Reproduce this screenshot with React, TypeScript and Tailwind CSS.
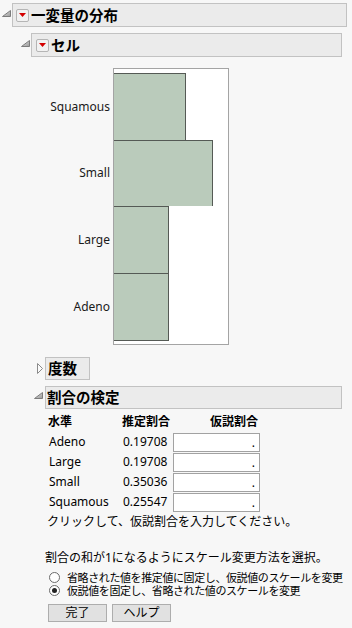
import React from 'react';

/* ── Data ── */
interface Level {
  name: string;
  est: number;
}

const levels: Level[] = [
  { name: 'Adeno', est: 0.19708 },
  { name: 'Large', est: 0.19708 },
  { name: 'Small', est: 0.35036 },
  { name: 'Squamous', est: 0.25547 },
];

// chart draws top → bottom in reverse order
const chartRows = [...levels].reverse();
const rowHeights = [67, 66, 67, 67];

const FONT = "font-['Noto_Sans','Noto_Sans_CJK_JP',sans-serif]";

function OpenTri() {
  return (
    <svg width="9" height="7" viewBox="0 0 9 7" className="shrink-0">
      <defs>
        <linearGradient id="tg" x1="0" y1="0" x2="1" y2="1">
          <stop offset="0" stopColor="#e4e4e4" />
          <stop offset="1" stopColor="#9a9a9a" />
        </linearGradient>
      </defs>
      <polygon points="8.5,0.5 8.5,6.5 0.5,6.5" fill="url(#tg)" stroke="#7c7c7c" strokeWidth="1" />
    </svg>
  );
}

function ClosedTri() {
  return (
    <svg width="6" height="11" viewBox="0 0 6 11" className="shrink-0">
      <polygon points="0.5,0.5 5.5,5.5 0.5,10.5" fill="#fafafa" stroke="#8a8a8a" strokeWidth="1" />
    </svg>
  );
}

function RedMenu() {
  return (
    <div className="w-[13px] h-[13px] shrink-0 bg-[#f2f2f2] border border-[#b5b5b5] rounded-[2px] flex items-start justify-center pt-[3px]">
      <svg width="7" height="4" viewBox="0 0 7 4">
        <polygon points="0,0 7,0 3.5,4" fill="#d40000" />
      </svg>
    </div>
  );
}

function Radio({ checked }: { checked?: boolean }) {
  return (
    <div className="w-[11px] h-[11px] shrink-0 rounded-full border border-[#6b6b6b] bg-white flex items-center justify-center">
      {checked && <div className="w-[5px] h-[5px] rounded-full bg-[#222]" />}
    </div>
  );
}

export default function App() {
  const maxW = 100 / 0.35036;

  return (
    <div className={`w-[352px] h-[628px] overflow-hidden bg-[#f7f7f7] text-black text-[12px] ${FONT}`}>
      {/* ── 一変量の分布 ── */}
      <div className="flex items-center mt-[3px]">
        <div className="ml-[2px] -mt-[3px]"><OpenTri /></div>
        <div className="ml-[1px] w-[335px] h-[24px] border border-[#c2c2c2] bg-[#ebebeb] flex items-center pl-[3px] gap-[2px]">
          <RedMenu />
          <span className="text-[14.5px] font-bold leading-none">一変量の分布</span>
        </div>
      </div>

      {/* ── セル ── */}
      <div className="flex items-center mt-[6px]">
        <div className="ml-[21px] -mt-[3px]"><OpenTri /></div>
        <div className="ml-[1px] w-[311px] h-[24px] border border-[#c2c2c2] bg-[#ebebeb] flex items-center pl-[4px] gap-[2px]">
          <RedMenu />
          <span className="text-[14.5px] font-bold leading-none">セル</span>
        </div>
      </div>

      {/* ── 棒グラフ ── */}
      <div className="flex mt-[11px]">
        <div className="w-[110px] pt-[5px] flex flex-col">
          {chartRows.map((l, i) => (
            <div key={l.name} style={{ height: rowHeights[i] }} className="flex items-center justify-end text-[12px] text-[#1a1a1a]">
              {l.name}
            </div>
          ))}
        </div>
        <div className="ml-[3px] w-[116px] h-[277px] border border-[#a4a4a4] bg-white pt-[4px]">
          {chartRows.map((l, i) => (
            <div
              key={l.name}
              style={{ height: rowHeights[i] + (i === chartRows.length - 1 ? 1 : 0), width: Math.round(l.est * maxW) - 1 }}
              className={`bg-[#bacbbb] border-t border-r border-[#555a55] ${i === chartRows.length - 1 ? 'border-b' : ''}`}
            />
          ))}
        </div>
      </div>

      {/* ── 度数 ── */}
      <div className="flex items-center mt-[12px]">
        <div className="ml-[37px] -mt-[1px]"><ClosedTri /></div>
        <div className="ml-[2px] w-[45px] h-[23px] border border-[#c2c2c2] bg-[#ebebeb] flex items-center pl-[2px]">
          <span className="text-[14.5px] font-bold leading-none">度数</span>
        </div>
      </div>

      {/* ── 割合の検定 ── */}
      <div className="flex items-center mt-[6px]">
        <div className="ml-[34px] -mt-[4px]"><OpenTri /></div>
        <div className="ml-[2px] w-[297px] h-[23px] border border-[#c2c2c2] bg-[#ebebeb] flex items-center pl-[1px]">
          <span className="text-[14.5px] font-bold leading-none">割合の検定</span>
        </div>
      </div>

      {/* 表 */}
      <div className="mt-[3px] pl-[48px]">
        <div className="flex h-[20px] items-center font-bold text-[12px]">
          <div className="w-[74px]">水準</div>
          <div className="w-[88px]">推定割合</div>
          <div>仮説割合</div>
        </div>
        {levels.map((l) => (
          <div key={l.name} className="flex h-[20px] items-center">
            <div className="w-[75px] pl-[1px]">{l.name}</div>
            <div className="w-[50px]">{l.est.toFixed(5)}</div>
            <div className="w-[87px] h-[19px] mt-[1px] border border-[#a2a2a2] bg-white flex items-end justify-end pr-[4px] leading-[16px]">.</div>
          </div>
        ))}
        <div className="h-[20px] flex items-center -ml-[1px]">クリックして、仮説割合を入力してください。</div>
      </div>

      {/* スケール変更 */}
      <div className="mt-[16px] pl-[45px]">
        <div className="h-[20px] flex items-center">割合の和が1になるようにスケール変更方法を選択。</div>
        <div className="mt-[3px] pl-[4px]">
          <div className="flex items-center h-[13px] gap-[7px]">
            <Radio />
            <span className="text-[11px] leading-[12px] tracking-[-0.4px] whitespace-nowrap">省略された値を推定値に固定し、仮説値のスケールを変更</span>
          </div>
          <div className="flex items-center h-[13px] gap-[7px]">
            <Radio checked />
            <span className="text-[11px] leading-[12px] tracking-[-0.4px] whitespace-nowrap">仮説値を固定し、省略された値のスケールを変更</span>
          </div>
        </div>
        <div className="flex gap-[5px] mt-[7px] pl-[3px]">
          <button className="w-[59px] h-[18px] bg-[#e1e1e1] border border-[#adadad] text-[12px] leading-none flex items-center justify-center">完了</button>
          <button className="w-[59px] h-[18px] bg-[#e1e1e1] border border-[#adadad] text-[12px] leading-none flex items-center justify-center">ヘルプ</button>
        </div>
      </div>
    </div>
  );
}
